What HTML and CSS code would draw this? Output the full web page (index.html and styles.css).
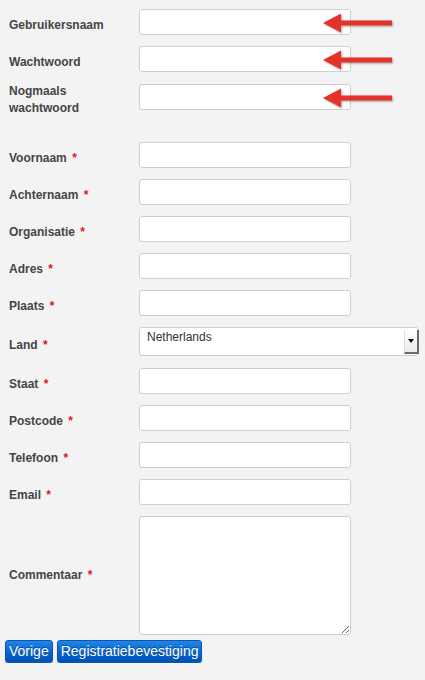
FILE: index.html
```html
<!DOCTYPE html>
<html lang="nl">
<head>
<meta charset="utf-8">
<title>Registratie</title>
<link rel="stylesheet" href="styles.css">
</head>
<body>
<form class="form">
  <div class="group">
    <div class="row">
      <label class="label">Gebruikersnaam</label>
      <div class="field">
        <input class="input" type="text">
        <svg class="arrow" width="74" height="24" viewBox="0 0 74 24"><path d="M1 11 L19 1.5 L19 8.5 L70 8.5 L70 13.5 L19 13.5 L19 20.5 Z" fill="#e6332a"/></svg>
      </div>
    </div>
    <div class="row">
      <label class="label">Wachtwoord</label>
      <div class="field">
        <input class="input" type="password">
        <svg class="arrow" width="74" height="24" viewBox="0 0 74 24"><path d="M1 11 L19 1.5 L19 8.5 L70 8.5 L70 13.5 L19 13.5 L19 20.5 Z" fill="#e6332a"/></svg>
      </div>
    </div>
    <div class="row">
      <label class="label">Nogmaals wachtwoord</label>
      <div class="field">
        <input class="input" type="password">
        <svg class="arrow" width="74" height="24" viewBox="0 0 74 24"><path d="M1 11 L19 1.5 L19 8.5 L70 8.5 L70 13.5 L19 13.5 L19 20.5 Z" fill="#e6332a"/></svg>
      </div>
    </div>
  </div>
  <div class="group group-second">
    <div class="row"><label class="label">Voornaam <span class="req">*</span></label><div class="field"><input class="input" type="text"></div></div>
    <div class="row"><label class="label">Achternaam <span class="req">*</span></label><div class="field"><input class="input" type="text"></div></div>
    <div class="row"><label class="label">Organisatie <span class="req">*</span></label><div class="field"><input class="input" type="text"></div></div>
    <div class="row"><label class="label">Adres <span class="req">*</span></label><div class="field"><input class="input" type="text"></div></div>
    <div class="row"><label class="label">Plaats <span class="req">*</span></label><div class="field"><input class="input" type="text"></div></div>
    <div class="row">
      <label class="label">Land <span class="req">*</span></label>
      <div class="field select-wrap">
        <select class="select"><option>Netherlands</option></select>
        <span class="select-btn"><span class="select-tri"></span></span>
      </div>
    </div>
    <div class="row"><label class="label">Staat <span class="req">*</span></label><div class="field"><input class="input" type="text"></div></div>
    <div class="row"><label class="label">Postcode <span class="req">*</span></label><div class="field"><input class="input" type="text"></div></div>
    <div class="row"><label class="label">Telefoon <span class="req">*</span></label><div class="field"><input class="input" type="text"></div></div>
    <div class="row"><label class="label">Email <span class="req">*</span></label><div class="field"><input class="input" type="text"></div></div>
    <div class="row"><label class="label">Commentaar <span class="req">*</span></label><div class="field"><textarea class="textarea"></textarea></div></div>
  </div>
  <div class="buttons">
    <button type="button" class="btn">Vorige</button>
    <button type="button" class="btn">Registratiebevestiging</button>
  </div>
</form>
</body>
</html>
```
FILE: styles.css
```css
html, body {
  margin: 0;
  padding: 0;
  background: #f3f3f3;
}
body {
  font-family: "Liberation Sans", Arial, Helvetica, sans-serif;
  color: #4d4d4d;
}
.form {
  padding: 9px 5px 0 5px;
}
.group {
  display: flex;
  flex-direction: column;
  gap: 4px;
}
.group-second {
  margin-top: 25px;
}
.row {
  display: flex;
  align-items: center;
}
.label {
  width: 134px;
  flex: none;
  box-sizing: border-box;
  padding: 0 12px 0 4px;
  font-size: 12px;
  font-weight: bold;
  line-height: 17px;
  color: #454545;
}
.req {
  color: #e0141c;
  margin-left: 2px;
  font-size: 12px;
}
.field {
  position: relative;
}
.input {
  display: block;
  box-sizing: border-box;
  width: 212px;
  height: 26px;
  margin: 0 0 7px 0;
  background: #fff;
  border: 1px solid #cfcfcf;
  border-radius: 3px;
  font-family: inherit;
  font-size: 12px;
  padding: 2px 6px;
}
.arrow {
  position: absolute;
  left: 183px;
  top: 3px;
  filter: drop-shadow(1px 1px 1px rgba(0,0,0,0.35));
}
.select-wrap {
  width: 280px;
}
.select {
  display: block;
  box-sizing: border-box;
  width: 280px;
  height: 29px;
  margin: 0 0 8px 0;
  appearance: none;
  -webkit-appearance: none;
  background: #fff;
  border: 1px solid #cfcfcf;
  border-radius: 3px;
  font-family: inherit;
  font-size: 12px;
  color: #333;
  padding: 0 7px 10px 7px;
}
.select-btn {
  position: absolute;
  right: 0;
  top: 3px;
  width: 15px;
  height: 24px;
  box-sizing: border-box;
  background: linear-gradient(#ffffff, #ececec);
  border-left: 1px solid #e0e0e0;
  border-right: 2px solid #6b6b6b;
  border-bottom: 2px solid #6b6b6b;
  display: flex;
  align-items: center;
  justify-content: center;
}
.select-tri {
  width: 0;
  height: 0;
  border-left: 3px solid transparent;
  border-right: 3px solid transparent;
  border-top: 4px solid #111;
}
.textarea {
  display: block;
  box-sizing: border-box;
  width: 212px;
  height: 119px;
  margin: 0;
  background: #fff;
  border: 1px solid #cfcfcf;
  border-radius: 3px;
  font-family: inherit;
  font-size: 12px;
}
.buttons {
  display: flex;
  gap: 4px;
  margin-top: 5px;
}
.btn {
  height: 23px;
  padding: 0 3px;
  border: 1px solid #0a56b0;
  border-radius: 3px;
  background: linear-gradient(#1f86e8, #0a62cc 55%, #0052b4);
  color: #fff;
  font-family: "Liberation Sans", Arial, Helvetica, sans-serif;
  font-size: 14px;
  line-height: 21px;
  text-shadow: 0 -1px 0 rgba(0,0,0,0.35);
  box-shadow: 0 1px 1px rgba(0,0,0,0.25);
  cursor: pointer;
}
```
